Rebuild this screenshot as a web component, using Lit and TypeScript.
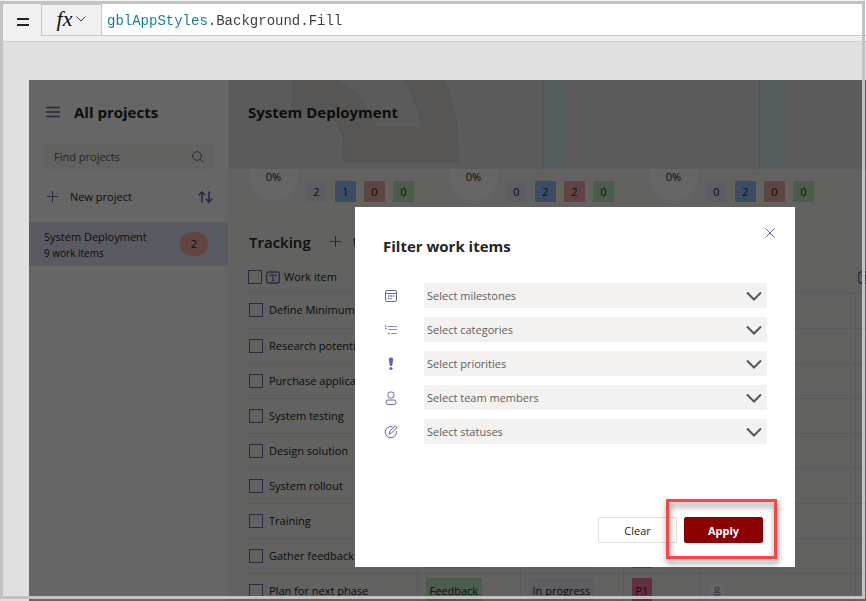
import { LitElement, html, css, svg, nothing } from "lit";
import { customElement } from "lit/decorators.js";

interface Stat { percent: string; counts: number[] }
interface WorkItem { name: string; category?: string; status?: string; priority?: string }

const STATS: Stat[] = [
  { percent: "0%", counts: [2, 1, 0, 0] },
  { percent: "0%", counts: [0, 2, 2, 0] },
  { percent: "0%", counts: [0, 2, 0, 0] },
];

const ITEMS: WorkItem[] = [
  { name: "Define Minimum" },
  { name: "Research potential" },
  { name: "Purchase application" },
  { name: "System testing" },
  { name: "Design solution" },
  { name: "System rollout" },
  { name: "Training" },
  { name: "Gather feedback from", category: "Feedback", status: "In progress", priority: "P1" },
  { name: "Plan for next phase", category: "Feedback", status: "In progress", priority: "P1" },
];

const person = svg`<rect x="5" y="2" width="6" height="6" rx="2.4"/><rect x="3" y="10" width="10" height="4.6" rx="2.2"/>`;

const FILTERS = [
  {
    id: "milestones",
    label: "Select milestones",
    icon: svg`<rect x="2.500" y="2.500" width="11" height="11" rx="1.600"/><path d="M2.500 5.500h11"/><path d="M7.400 8h1.400M9.800 8h1.400M5 8h1.400M5 10.600h1.400M7.400 10.600h1.400" stroke-width="1.400"/>`,
  },
  {
    id: "categories",
    label: "Select categories",
    icon: svg`<path d="M2 4h1.300M2 6.500h1.300M5 11.500h1.300" stroke-width="1.400"/><path d="M5 4.500h9M5 7.500h9M8 11.500h6" opacity=".75"/>`,
  },
  {
    id: "priorities",
    label: "Select priorities",
    icon: svg`<path d="M8 1.600c1.400 0 2.300.8 2.100 2.100L9.300 9.200c-.2 1-2.400 1-2.600 0L5.900 3.700C5.700 2.400 6.600 1.600 8 1.600z" fill="#6264a7" stroke="none"/><circle cx="8" cy="12.500" r="1.600" fill="#6264a7" stroke="none"/>`,
  },
  { id: "members", label: "Select team members", icon: person },
  {
    id: "statuses",
    label: "Select statuses",
    icon: svg`<path d="M9.500 2.700A5.600 5.600 0 1 0 13.400 7.200M6 10l.7-2.600 5-5c1.200-1 2.700.5 1.700 1.700l-5 5z"/>`,
  },
];

@customElement("app-root")
export class AppRoot extends LitElement {
  static styles = css`
    :host {
      display: block;
      position: relative;
      height: 100vh;
      overflow: hidden;
      background: #e0e0e0;
      font-family: "Open Sans", "Noto Sans", sans-serif;
      font-size: 11px;
      line-height: 16px;
      color: #252423;
    }
    *, *::before, *::after { box-sizing: border-box; }
    button, input, select { font: inherit; color: inherit; margin: 0; border: 0; padding: 0; background: none; }
    h1, h2 { margin: 0; font-size: 15px; line-height: 24px; font-weight: 700; }
    svg { display: block; flex: none; fill: none; }
    .line { stroke: #6264a7; }

    .frame {
      position: absolute;
      inset: 1px 1px 2px 0;
      border: 3px solid #c2c2c2;
      pointer-events: none;
    }
    .formula {
      display: flex;
      height: 42px;
      padding: 4px 0 5px 3px;
      background: #f0f0f0;
      border-bottom: 1px solid #cfcfcf;
    }
    .equals { width: 38px; display: grid; place-items: center; padding-left: 2px; padding-top: 4px; }
    .fx {
      width: 61px;
      display: flex;
      align-items: center;
      justify-content: center;
      gap: 4px;
      padding-bottom: 2px;
      border: 1px solid #c8c8c8;
    }
    .fx-name { font: italic 22px/24px "Liberation Serif", serif; color: #111; }
    .code {
      flex: 1;
      background: #fff;
      border-bottom: 1px solid #c8c8c8;
      display: flex;
    }
    .code-input {
      flex: 1;
      margin-left: 5px;
      padding-top: 2px;
      font: 14px/30px "Liberation Mono", monospace;
      color: transparent;
      background: linear-gradient(90deg, #0e8088 12ch, #3b3b3b 12ch);
      -webkit-background-clip: text;
      background-clip: text;
    }

    .app {
      position: relative;
      margin: 38px 0 0 29px;
      display: flex;
      height: 560px;
      background: #f5f4f0;
    }
    .side { width: 200px; flex: none; background: #fff; border-right: 1px solid #f5f5f5; }
    .side-head { display: flex; align-items: center; gap: 14px; padding: 20px 0 0 17px; }
    .search {
      display: flex;
      align-items: center;
      height: 25px;
      margin: 20px 15px 0 15px;
      padding: 0 9px 0 10px;
      background: #f5f4f0;
    }
    .search input { flex: 1; min-width: 0; }
    .search input::placeholder { color: #605e5c; opacity: 1; }
    .actions { display: flex; align-items: center; justify-content: space-between; height: 53px; padding: 2px 15px 0 18px; }
    .plain { display: flex; align-items: center; gap: 11px; }
    .project {
      display: flex;
      align-items: center;
      justify-content: space-between;
      width: 100%;
      height: 44px;
      padding: 0 20px 0 15px;
      background: #e2e2f4;
      text-align: left;
    }
    .project span { display: block; }
    .project .name { padding-top: 2px; }
    .project .small { font-size: 10px; }
    .project .badge {
      width: 28px;
      height: 24px;
      line-height: 24px;
      border-radius: 12px;
      background: #f5aaa2;
      text-align: center;
    }

    .main { flex: 1; min-width: 0; overflow: hidden; }
    .banner { display: grid; height: 89px; background: #e4e4e4; }
    .banner > * { grid-area: 1 / 1; }
    .banner h1 { padding: 20px 0 0 19px; }
    .stats { display: flex; height: 59px; overflow: hidden; padding-left: 20px; }
    .stat { flex: none; width: 200px; display: flex; }
    .donut {
      width: 49px;
      height: 49px;
      margin: -17px 8px 0 0;
      border-radius: 50%;
      background: #fff;
      display: grid;
      place-items: center;
    }
    .count { width: 21px; height: 21px; line-height: 22px; margin: 12px 8px 0 0; text-align: center; }
    .c0 { background: #e8e8f8; }
    .c1 { background: #96bdfa; }
    .c2 { background: #f0aaa8; }
    .c3 { background: #c0e8c0; }
    .tracking { display: flex; align-items: center; gap: 19px; height: 32px; padding-left: 20px; margin-top: -2px; }
    .tracking h2 { font-weight: 600; }

    table { table-layout: fixed; width: 700px; margin-left: 16px; border-collapse: collapse; }
    th, td { padding: 0; border-bottom: 1px solid #e0e0e2; font-weight: 400; text-align: left; white-space: nowrap; }
    td + td { border-left: 1px solid #e0e0e2; padding-left: 8px; }
    th { height: 34px; padding-top: 5px; }
    td { height: 35px; }
    tbody tr:first-child td { height: 36px; }
    .w1 { width: 172px; }
    .w2 { width: 103px; }
    .w3 { width: 77px; }
    .w4 { width: 155px; }
    .cell { display: flex; align-items: center; gap: 6px; padding-left: 4px; overflow: hidden; }
    .cell.top { gap: 4px; padding-left: 3px; }
    input[type="checkbox"] {
      appearance: none;
      width: 14px;
      height: 14px;
      flex: none;
      border: 1px solid #6264a7;
    }
    .chip { display: inline-block; height: 25px; line-height: 26px; padding: 0 4px; vertical-align: middle; }
    .green { background: #c0e8c0; }
    .lilac { background: #ececf5; }
    .pink { background: #f078a8; }
    .avatar { width: 16px; height: 16px; border-radius: 50%; background: #fff; display: grid; place-items: center; }

    .shade { position: absolute; inset: 0; background: rgba(0, 0, 0, 0.6); }
    .dialog {
      position: absolute;
      left: 326px;
      top: 127px;
      width: 440px;
      height: 360px;
      display: flex;
      flex-direction: column;
      background: #fff;
    }
    .dialog-head { display: flex; justify-content: space-between; align-items: flex-start; padding: 14px 13px 0 28px; }
    .dialog-head h2 { margin-top: 13px; }
    .close { width: 24px; height: 24px; display: grid; place-items: center; }
    .filters { display: grid; gap: 9px; padding: 25px 28px 0; }
    .filter { display: grid; grid-template-columns: 16px 1fr; column-gap: 25px; align-items: center; }
    .pick { display: grid; align-items: center; background: #f3f2f1; }
    .pick > * { grid-area: 1 / 1; }
    .pick select { appearance: none; height: 25px; padding: 0 3px; color: #605e5c; }
    .pick svg { justify-self: end; margin-right: 5px; pointer-events: none; }
    .buttons { margin-top: auto; display: flex; justify-content: flex-end; gap: 7px; padding: 0 32px 24px 0; }
    .btn { width: 79px; height: 26px; padding-top: 1px; border: 1px solid #e1dfdd; border-radius: 2px; }
    .btn.primary { background: #8b0000; border-color: #8b0000; color: #fff; font-weight: 700; }
    .mark {
      position: absolute;
      right: 18px;
      bottom: 8px;
      width: 111px;
      height: 60px;
      border: 3px solid #fa4545;
      pointer-events: none;
      filter: drop-shadow(1px 4px 3px rgba(0, 0, 0, 0.5));
    }
  `;

  private plus() {
    return html`<svg class="line" width="12" height="12"><path d="M5.500 0v11M0 5.500h11" /></svg>`;
  }

  private columnIcon() {
    return html`<svg class="line" width="14" height="13" viewBox="0 0 14 13">
      <rect x=".7" y="1" width="12.600" height="11" rx="2" stroke-width="1.300" />
      <path d="M4 5.500V4h6v1.500M7 4v5.500M5.500 9.500h3" stroke-width="1.200" />
    </svg>`;
  }

  private banner() {
    return html`<svg width="100%" height="89" viewBox="0 0 637 89" preserveAspectRatio="xMinYMin slice">
      <path d="M64 0H111C131 12 141 24 148 46H193C190 28 184 14 175 0H217C226 20 230 44 230 82H115V66C115 48 105 32 84 31H64Z" fill="#dcd8d2" />
      <path d="M64 0V31H84C105 32 115 48 115 66V82H230M175 0C184 14 190 28 193 46" stroke="#cccac8" />
      <path d="M111 0C131 12 141 24 148 46H193M217 0C227 20 232 44 232 82" stroke="#ececec" />
      <path d="M313 0h25v89h-25zM530 0h25v89h-25z" fill="#d4e8ea" />
      <path d="M313.500 0v89M530.500 0v89" stroke="#c4cccd" />
    </svg>`;
  }

  private row(item: WorkItem) {
    return html`<tr>
      <td><label class="cell"><input type="checkbox" />${item.name}</label></td>
      <td>${item.category ? html`<span class="chip green">${item.category}</span>` : nothing}</td>
      <td>${item.status ? html`<span class="chip lilac">${item.status}</span>` : nothing}</td>
      <td>${item.priority ? html`<span class="chip pink">${item.priority}</span>` : nothing}</td>
      <td>
        ${item.priority
          ? html`<span class="avatar"><svg class="line" width="10" height="10" viewBox="0 0 16 16" stroke-width="1.500">${person}</svg></span>`
          : nothing}
      </td>
      <td></td>
    </tr>`;
  }

  render() {
    return html`
      <div class="formula">
        <span class="equals"><svg width="12" height="8"><path d="M0 1h12M0 7h12" stroke="#222" stroke-width="2" /></svg></span>
        <button class="fx" aria-label="Functions">
          <span class="fx-name">fx</span>
          <svg width="10" height="6"><path d="M.5 .5 5 5 9.500 .5" stroke="#444" /></svg>
        </button>
        <div class="code"><input class="code-input" aria-label="Formula" spellcheck="false" value="gblAppStyles.Background.Fill" /></div>
      </div>

      <div class="app">
        <nav class="side">
          <div class="side-head">
            <svg class="line" width="14" height="12" stroke-width="1.500"><path d="M0 1.500h14M0 6h14M0 10.500h14" /></svg>
            <h2>All projects</h2>
          </div>
          <div class="search">
            <input aria-label="Find projects" placeholder="Find projects" />
            <svg class="line" width="12" height="12"><circle cx="5" cy="5" r="4.300" /><path d="m8 8 3.700 3.700" /></svg>
          </div>
          <div class="actions">
            <button class="plain">${this.plus()} New project</button>
            <button class="plain" aria-label="Sort">
              <svg class="line" width="15" height="12" stroke-width="1.600"><path d="M4 11.500V1M.8 4.300 4 1l3.200 3.300M11 .5V11M7.800 7.700 11 11l3.200-3.300" /></svg>
            </button>
          </div>
          <button class="project">
            <span><span class="name">System Deployment</span><span class="small">9 work items</span></span>
            <span class="badge">2</span>
          </button>
        </nav>

        <main class="main">
          <header class="banner">${this.banner()}<h1>System Deployment</h1></header>
          <div class="stats">
            ${STATS.map(
              (s) => html`<div class="stat">
                <span class="donut">${s.percent}</span>
                ${s.counts.map((n, i) => html`<span class="count c${i}">${n}</span>`)}
              </div>`
            )}
          </div>
          <div class="tracking">
            <h2>Tracking</h2>
            <button class="plain">${this.plus()} New</button>
          </div>
          <table>
            <thead>
              <tr>
                <th class="w1"><label class="cell top"><input type="checkbox" />${this.columnIcon()} Work item</label></th>
                <th class="w2"></th>
                <th class="w2"></th>
                <th class="w3"></th>
                <th class="w4"></th>
                <th><span class="cell top">${this.columnIcon()}</span></th>
              </tr>
            </thead>
            <tbody>${ITEMS.map((i) => this.row(i))}</tbody>
          </table>
        </main>

        <div class="shade"></div>

        <section class="dialog" role="dialog" aria-labelledby="dialog-title">
          <div class="dialog-head">
            <h2 id="dialog-title">Filter work items</h2>
            <button class="close" aria-label="Close"><svg class="line" width="10" height="10"><path d="m.5.5 9 9M9.500.5l-9 9" /></svg></button>
          </div>
          <div class="filters">
            ${FILTERS.map(
              (f) => html`<div class="filter">
                <label for=${f.id} aria-label=${f.label}><svg class="line" width="16" height="16">${f.icon}</svg></label>
                <div class="pick">
                  <select id=${f.id}><option>${f.label}</option></select>
                  <svg width="16" height="10"><path d="m1 1.500 7 7 7-7" stroke="#555" stroke-width="2" /></svg>
                </div>
              </div>`
            )}
          </div>
          <div class="buttons">
            <button class="btn">Clear</button>
            <button class="btn primary">Apply</button>
          </div>
          <div class="mark"></div>
        </section>
      </div>
      <div class="frame"></div>
    `;
  }
}
